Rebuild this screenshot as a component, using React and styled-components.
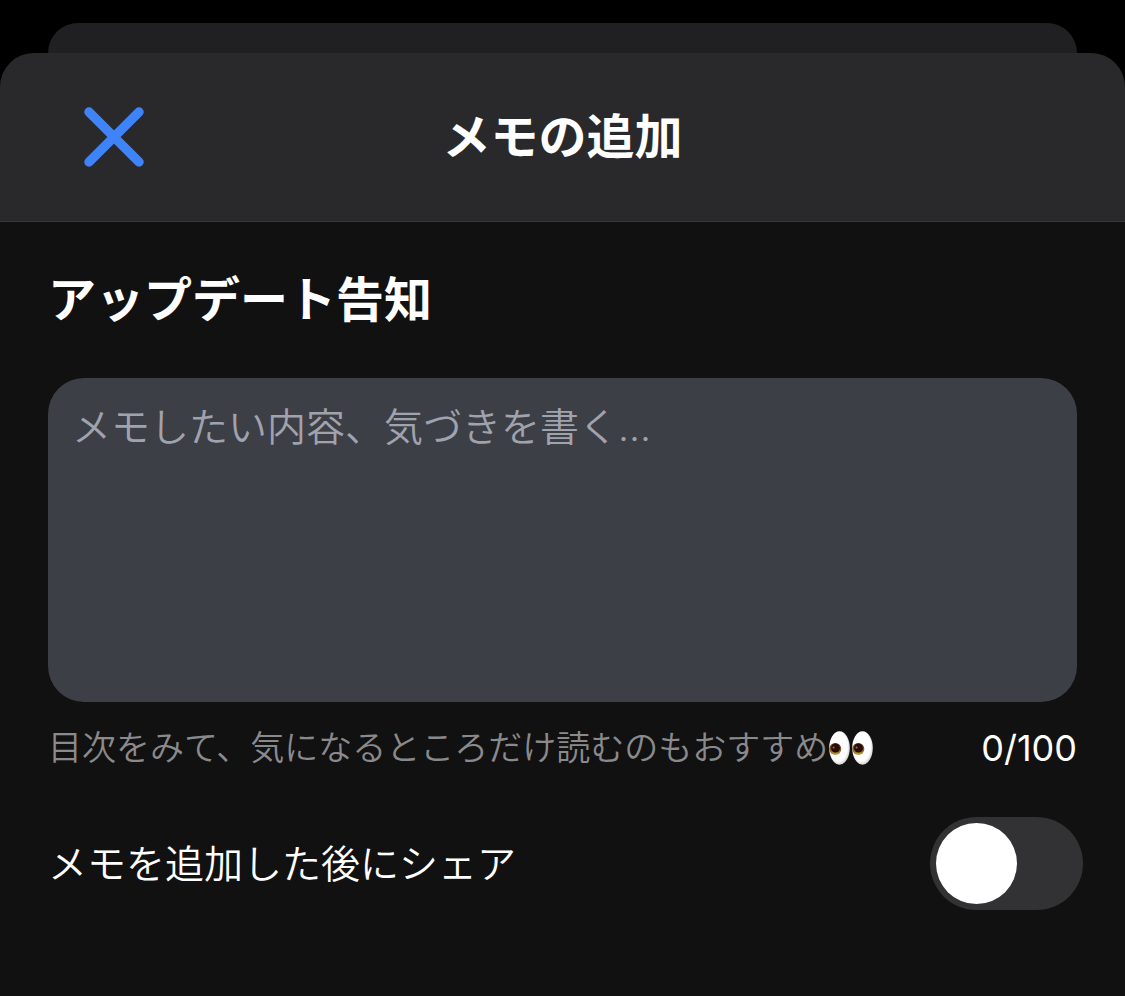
import { useState } from 'react';
import styled, { createGlobalStyle } from 'styled-components';

const MAX_LENGTH = 100;

const GlobalStyle = createGlobalStyle`
	* {
		box-sizing: border-box;
	}

	body {
		margin: 0;
		background: #111111;
		color: #ffffff;
		font-family: Inter, 'Noto Sans CJK JP', sans-serif;
	}
`;

const StyledBackdrop = styled.div`
	background: #000000;
	padding-top: 23px;
`;

const StyledBackSheet = styled.div`
	height: 30px;
	margin: 0 48px;
	border-radius: 30px 30px 0 0;
	background: #202022;
`;

const StyledSheet = styled.main`
	border-radius: 34px 34px 0 0;
	overflow: hidden;
	background: #111111;
`;

const StyledHeader = styled.header`
	display: grid;
	grid-template-columns: 60px 1fr 60px;
	align-items: center;
	padding: 48px 84px;
	border-bottom: 1px solid #38383a;
	background: #29292b;
`;

const StyledCloseButton = styled.button`
	display: flex;
	padding: 0;
	border: none;
	background: none;
	color: #3f83f8;
	cursor: pointer;
`;

const StyledTitle = styled.h1`
	margin: 0;
	font-size: 48px;
	font-weight: 700;
	line-height: 72px;
	text-align: ${(props) => props.align || 'left'};
`;

const StyledForm = styled.form`
	display: flex;
	flex-direction: column;
	padding: 42px 48px 86px;
`;

const StyledTextarea = styled.textarea`
	display: block;
	width: 100%;
	height: 324px;
	margin-top: 42px;
	padding: 24px;
	border: none;
	border-radius: 36px;
	outline: none;
	resize: none;
	background: #3d3f47;
	color: #ffffff;
	font-family: inherit;
	font-size: 39px;
	font-weight: 350;
	line-height: 50px;

	&::placeholder {
		color: #a0a3ad;
		opacity: 1;
	}
`;

const StyledRow = styled.div`
	display: flex;
	align-items: center;
	justify-content: space-between;
	margin-top: ${(props) => props.top};
	margin-right: ${(props) => props.overhang || '0'};
`;

const StyledHint = styled.p`
	display: flex;
	align-items: center;
	margin: 0;
	color: #8a8a8d;
	font-size: 34px;
	font-weight: 350;
	line-height: 50px;
`;

const StyledCounter = styled.output`
	font-size: 36px;
	line-height: 50px;
`;

const StyledLabel = styled.label`
	font-size: 39px;
	font-weight: 350;
	line-height: 50px;
`;

const StyledSwitch = styled.input`
	appearance: none;
	flex: none;
	display: flex;
	width: 153px;
	height: 93px;
	margin: 0;
	padding: 6px;
	border-radius: 47px;
	background: ${(props) => (props.checked ? '#30d158' : '#323234')};
	cursor: pointer;

	&::before {
		content: '';
		width: 81px;
		height: 81px;
		margin-left: ${(props) => (props.checked ? 'auto' : '0')};
		border-radius: 50%;
		background: #ffffff;
	}
`;

const CloseIcon = () => (
	<svg width='60' height='60' viewBox='0 0 60 60' fill='none' stroke='currentColor' strokeWidth='9.5' strokeLinecap='round' aria-hidden='true'>
		<path d='M5 5L55 55M55 5L5 55' />
	</svg>
);

const EyesIcon = () => (
	<svg width='46' height='34' viewBox='0 0 46 34' role='img' aria-label='👀'>
		<defs>
			<radialGradient id='eyeball' cx='0.45' cy='0.45' r='0.58'>
				<stop offset='0.75' stopColor='#ffffff' />
				<stop offset='1' stopColor='#c9c9c6' />
			</radialGradient>
			<linearGradient id='iris' x1='0' y1='0' x2='0' y2='1'>
				<stop offset='0' stopColor='#4a2a10' />
				<stop offset='0.6' stopColor='#85601c' />
				<stop offset='1' stopColor='#c3a548' />
			</linearGradient>
		</defs>
		{[0, 23].map((x) => (
			<g key={x} transform={`translate(${x} 0)`}>
				<ellipse cx='11.5' cy='17' rx='10.3' ry='16.7' fill='url(#eyeball)' />
				<circle cx='7.3' cy='18' r='6' fill='url(#iris)' />
				<circle cx='7.5' cy='17.2' r='4.4' fill='#2a0c04' />
				<circle cx='5.6' cy='16.6' r='1' fill='#8d7568' />
			</g>
		))}
	</svg>
);

const App = () => {
	const [memo, setMemo] = useState('');
	const [share, setShare] = useState(false);

	return (
		<>
			<GlobalStyle />
			<StyledBackdrop>
				<StyledBackSheet />
				<StyledSheet>
					<StyledHeader>
						<StyledCloseButton type='button' aria-label='閉じる'>
							<CloseIcon />
						</StyledCloseButton>
						<StyledTitle align='center'>メモの追加</StyledTitle>
					</StyledHeader>
					<StyledForm>
						<StyledTitle as='h2'>アップデート告知</StyledTitle>
						<StyledTextarea
							aria-label='メモ'
							placeholder='メモしたい内容、気づきを書く...'
							maxLength={MAX_LENGTH}
							value={memo}
							onChange={(e) => setMemo(e.target.value)}
						/>
						<StyledRow top='21px'>
							<StyledHint>
								目次をみて、気になるところだけ読むのもおすすめ
								<EyesIcon />
							</StyledHint>
							<StyledCounter>
								{memo.length}/{MAX_LENGTH}
							</StyledCounter>
						</StyledRow>
						<StyledRow top='44px' overhang='-6px'>
							<StyledLabel htmlFor='share'>メモを追加した後にシェア</StyledLabel>
							<StyledSwitch
								id='share'
								type='checkbox'
								role='switch'
								checked={share}
								onChange={(e) => setShare(e.target.checked)}
							/>
						</StyledRow>
					</StyledForm>
				</StyledSheet>
			</StyledBackdrop>
		</>
	);
};

export default App;
